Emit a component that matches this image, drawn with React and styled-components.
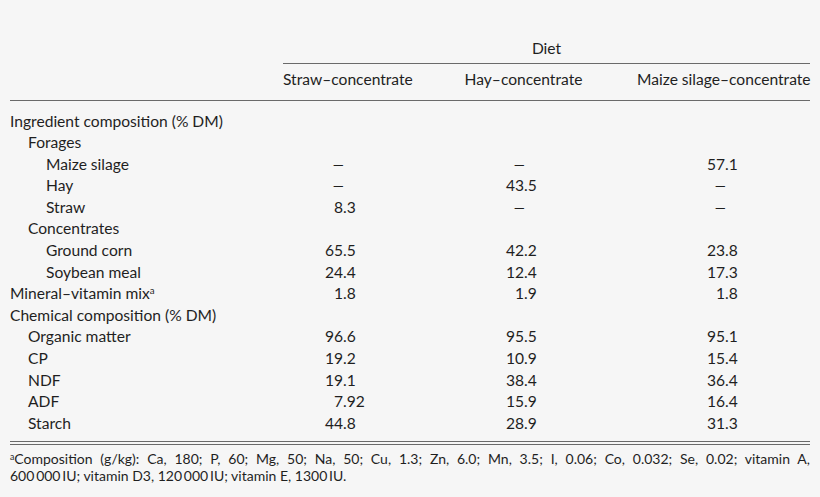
import React from "react";
import styled, { createGlobalStyle } from "styled-components";

const Global = createGlobalStyle`
  html, body { margin: 0; padding: 0; background: #f6f6f6; }
  body { font-family: Lato, "Liberation Sans", sans-serif; color: #1f1f1f; }
`;

const Page = styled.div`
  width: 820px;
  height: 497px;
  padding: 38px 10px 0 10px;
  box-sizing: border-box;
  background: #f6f6f6;
`;

const COLS = "273px 127px 227px 173px";

const Grid = styled.div`
  display: grid;
  grid-template-columns: ${COLS};
  font-size: 15.6px;
`;

const DietCell = styled.div`
  grid-column: 2 / 5;
  text-align: center;
  line-height: 20px;
  padding-bottom: 5px;
  border-bottom: 1.5px solid #6a6a6a;
`;

const HeadRow = styled(Grid)`
  padding: 5px 0 10.5px;
  border-bottom: 1.5px solid #6a6a6a;
  line-height: 20px;
`;

const HeadCell = styled.div`
  text-align: center;
  white-space: nowrap;
`;

const Body = styled.div`
  padding: 10px 0 6.5px;
  border-bottom: 4px double #6a6a6a;
`;

const Row = styled(Grid)`
  height: 21.6px;
  line-height: 21.6px;
`;

const Label = styled.div`
  padding-left: ${(p) => p.$level * 18}px;
  white-space: nowrap;
`;

const NumCell = styled.div`
  display: flex;
  white-space: nowrap;
`;

const IntPart = styled.span`
  flex: 0 0 ${(p) => p.$w}px;
  text-align: right;
`;

const Dash = styled.span`
  display: inline-block;
  transform: scaleX(1.5);
  transform-origin: right center;
  margin-right: -2px;
`;

const Sup = styled.sup`
  font-size: 0.62em;
  line-height: 0;
  vertical-align: 0.5em;
`;

const Footnote = styled.div`
  margin-top: 5px;
  font-size: 14px;
  line-height: 17px;
`;

const FootLine = styled.span`
  display: block;
  text-align: ${(p) => (p.$justify ? "justify" : "left")};
  text-align-last: ${(p) => (p.$justify ? "justify" : "auto")};
  white-space: nowrap;
`;

const INT_W = [60, 114, 88];

const rows = [
  ["Ingredient composition (% DM)", 0, null],
  ["Forages", 1, null],
  ["Maize silage", 2, ["–", "–", "57.1"]],
  ["Hay", 2, ["–", "43.5", "–"]],
  ["Straw", 2, ["8.3", "–", "–"]],
  ["Concentrates", 1, null],
  ["Ground corn", 2, ["65.5", "42.2", "23.8"]],
  ["Soybean meal", 2, ["24.4", "12.4", "17.3"]],
  ["Mineral–vitamin mix", 0, ["1.8", "1.9", "1.8"], true],
  ["Chemical composition (% DM)", 0, null],
  ["Organic matter", 1, ["96.6", "95.5", "95.1"]],
  ["CP", 1, ["19.2", "10.9", "15.4"]],
  ["NDF", 1, ["19.1", "38.4", "36.4"]],
  ["ADF", 1, ["7.92", "15.9", "16.4"]],
  ["Starch", 1, ["44.8", "28.9", "31.3"]],
];

function Num({ value, w }) {
  if (value === "–") {
    return (
      <NumCell>
        <IntPart $w={w}>
          <Dash>–</Dash>
        </IntPart>
      </NumCell>
    );
  }
  const i = value.indexOf(".");
  const int = i < 0 ? value : value.slice(0, i);
  const frac = i < 0 ? "" : value.slice(i);
  return (
    <NumCell>
      <IntPart $w={w}>{int}</IntPart>
      <span>{frac}</span>
    </NumCell>
  );
}

export default function App() {
  return (
    <>
      <Global />
      <Page>
        <Grid>
          <DietCell>Diet</DietCell>
        </Grid>
        <HeadRow>
          <div />
          <HeadCell>Straw–concentrate</HeadCell>
          <HeadCell>Hay–concentrate</HeadCell>
          <HeadCell>Maize silage–concentrate</HeadCell>
        </HeadRow>
        <Body>
          {rows.map(([label, level, vals, sup]) => (
            <Row key={label}>
              <Label $level={level}>
                {label}
                {sup && <Sup>a</Sup>}
              </Label>
              {vals
                ? vals.map((v, k) => <Num key={k} value={v} w={INT_W[k]} />)
                : null}
            </Row>
          ))}
        </Body>
        <Footnote>
          <FootLine $justify>
            <Sup>a</Sup>Composition (g/kg): Ca, 180; P, 60; Mg, 50; Na, 50; Cu, 1.3; Zn, 6.0; Mn, 3.5; I, 0.06; Co, 0.032; Se, 0.02; vitamin A,
          </FootLine>
          <FootLine>
            600{"\u2009"}000{"\u2009"}IU; vitamin D3, 120{"\u2009"}000{"\u2009"}IU; vitamin E, 1300{"\u2009"}IU.
          </FootLine>
        </Footnote>
      </Page>
    </>
  );
}
